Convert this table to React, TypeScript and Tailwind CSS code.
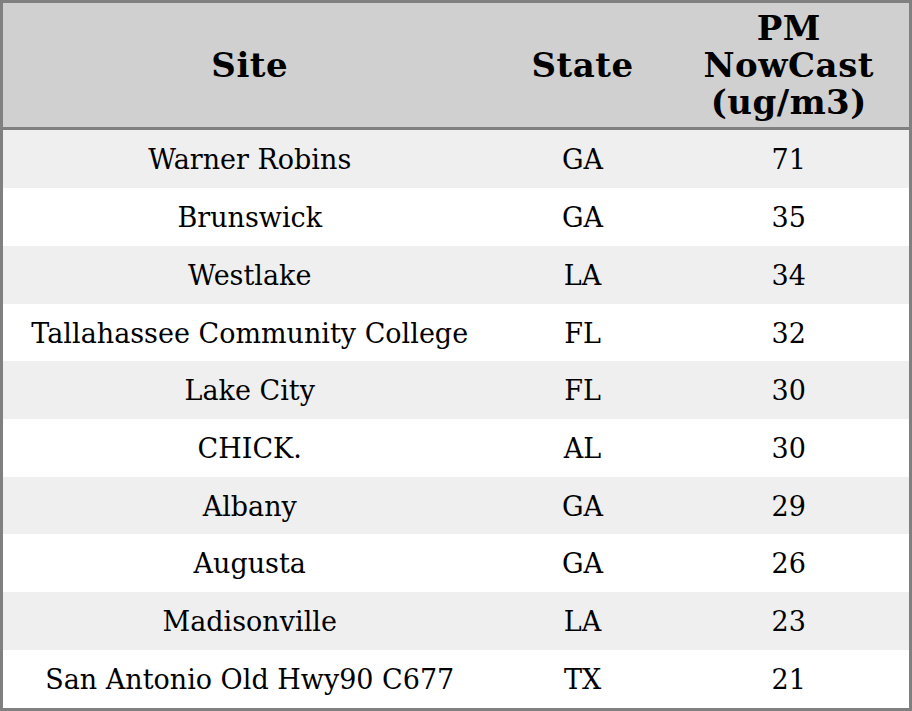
const rows = [
  { site: 'Warner Robins', state: 'GA', pm: 71 },
  { site: 'Brunswick', state: 'GA', pm: 35 },
  { site: 'Westlake', state: 'LA', pm: 34 },
  { site: 'Tallahassee Community College', state: 'FL', pm: 32 },
  { site: 'Lake City', state: 'FL', pm: 30 },
  { site: 'CHICK.', state: 'AL', pm: 30 },
  { site: 'Albany', state: 'GA', pm: 29 },
  { site: 'Augusta', state: 'GA', pm: 26 },
  { site: 'Madisonville', state: 'LA', pm: 23 },
  { site: 'San Antonio Old Hwy90 C677', state: 'TX', pm: 21 },
];

export default function App() {
  return (
    <main className="w-[912px] h-[711px] bg-white font-['DejaVu_Serif',serif] text-black">
      <table className="w-full h-full border-collapse border-[3px] border-[#808080] table-fixed">
        <colgroup>
          <col className="w-[495px]" />
          <col className="w-[172px]" />
          <col />
        </colgroup>
        <thead>
          <tr className="bg-[#d0d0d0] h-[127px] border-b-[3px] border-[#808080]">
            <th className="text-[34px] font-bold leading-[37px] tracking-[0.5px]">Site</th>
            <th className="text-[34px] font-bold leading-[37px] tracking-[0.5px]">State</th>
            <th className="text-[34px] font-bold leading-[37px] tracking-[0.5px]">
              PM<br />NowCast<br />(ug/m3)
            </th>
          </tr>
        </thead>
        <tbody>
          {rows.map((row, index) => (
            <tr key={index} className={index % 2 === 0 ? 'bg-[#efefef]' : 'bg-white'}>
              <td className="text-center text-[27px] pt-[3px]">{row.site}</td>
              <td className="text-center text-[27px] pt-[3px]">{row.state}</td>
              <td className="text-center text-[27px] pt-[3px]">{row.pm}</td>
            </tr>
          ))}
        </tbody>
      </table>
    </main>
  );
}
